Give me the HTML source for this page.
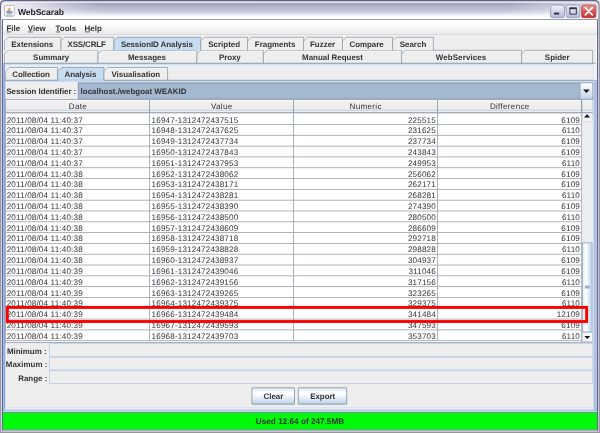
<!DOCTYPE html>
<html><head><meta charset="utf-8"><title>WebScarab</title>
<style>
html,body{margin:0;padding:0;background:#eeeeee;}
body{width:600px;height:433px;overflow:hidden;position:relative;font-family:"Liberation Sans",sans-serif;}
svg{position:absolute;left:0;top:0;display:block;will-change:transform;}
text{text-rendering:geometricPrecision;font-family:"Liberation Sans",sans-serif;font-size:8.1px;fill:#333333;}
.b{font-weight:bold;font-size:7.95px;}
.p{letter-spacing:0.16px;}
.c{text-anchor:middle;}
.e{text-anchor:end;}
</style></head><body>
<svg width="600" height="433" viewBox="0 0 600 433">
<defs>
<linearGradient id="gt" x1="0" y1="2" x2="0" y2="19" gradientUnits="userSpaceOnUse"><stop offset="0.03" stop-color="#d7d4e8"/><stop offset="0.09" stop-color="#aaa8c0"/><stop offset="0.147" stop-color="#a3a3bc"/><stop offset="0.2" stop-color="#afadc6"/><stop offset="0.26" stop-color="#b4b4cd"/><stop offset="0.38" stop-color="#b7bbd0"/><stop offset="0.5" stop-color="#c0c8d7"/><stop offset="0.62" stop-color="#cdd5e4"/><stop offset="0.68" stop-color="#dee1ee"/><stop offset="0.74" stop-color="#ebebf5"/><stop offset="0.79" stop-color="#f5f3fa"/><stop offset="0.85" stop-color="#fafafd"/><stop offset="0.91" stop-color="#ffffff"/></linearGradient>
<linearGradient id="gm" x1="0" y1="0" x2="0" y2="1"><stop offset="0" stop-color="#ffffff"/><stop offset="0.35" stop-color="#fbfbfb"/><stop offset="1" stop-color="#e9e9e9"/></linearGradient>
<linearGradient id="gb" x1="0" y1="0" x2="0" y2="1"><stop offset="0" stop-color="#dde8f3"/><stop offset="0.3" stop-color="#ffffff"/><stop offset="0.5" stop-color="#f4f8fc"/><stop offset="1" stop-color="#b8cfe5"/></linearGradient>
<linearGradient id="gc" x1="0" y1="0" x2="0" y2="1"><stop offset="0" stop-color="#ffffff"/><stop offset="0.4" stop-color="#e6eef7"/><stop offset="1" stop-color="#c2d4e8"/></linearGradient>
<linearGradient id="gh" x1="0" y1="0" x2="0" y2="1"><stop offset="0" stop-color="#fafafb"/><stop offset="0.15" stop-color="#f0f0f1"/><stop offset="1" stop-color="#e9eaec"/></linearGradient>
<linearGradient id="gw" x1="0" y1="0" x2="0" y2="1"><stop offset="0" stop-color="#f2f2fa"/><stop offset="1" stop-color="#b4b8d4"/></linearGradient>
<linearGradient id="gr" x1="0" y1="0" x2="0" y2="1"><stop offset="0" stop-color="#ee9a98"/><stop offset="0.45" stop-color="#dc5a58"/><stop offset="1" stop-color="#c23030"/></linearGradient>
<linearGradient id="gs" x1="0" y1="0" x2="1" y2="0"><stop offset="0" stop-color="#dde8f3"/><stop offset="0.35" stop-color="#ffffff"/><stop offset="1" stop-color="#b8cfe5"/></linearGradient>
<linearGradient id="gx" x1="0" y1="0" x2="1" y2="0"><stop offset="0" stop-color="#fff" stop-opacity="0.8"/><stop offset="0.05" stop-color="#fff" stop-opacity="0.62"/><stop offset="0.1" stop-color="#fff" stop-opacity="0.32"/><stop offset="0.165" stop-color="#fff" stop-opacity="0"/><stop offset="0.85" stop-color="#fff" stop-opacity="0"/><stop offset="0.93" stop-color="#fff" stop-opacity="0.35"/><stop offset="1" stop-color="#fff" stop-opacity="0.55"/></linearGradient>
</defs>

<rect x="0" y="0" width="600" height="433" fill="#eeeeee"/>
<path d="M0,21 L0,4.5 Q0,0 4.5,0 L594.5,0 Q599.5,0 599.5,4.5 L599.5,21 Z" fill="#62627c"/>
<path d="M1,21 L1,5.2 Q1,1.25 5.2,1.25 L594,1.25 Q598.6,1.25 598.6,5.2 L598.6,21 Z" fill="#efeef6"/>
<path d="M2,19.2 L2,5.8 Q2,2.2 5.8,2.2 L593.2,2.2 Q597.4,2.2 597.4,5.8 L597.4,19.2 Z" fill="url(#gt)"/>
<path d="M2,19 L2,5.8 Q2,2.2 5.8,2.2 L593.2,2.2 Q597.4,2.2 597.4,5.8 L597.4,19 Z" fill="url(#gx)"/>
<rect x="0" y="19.5" width="1" height="413.5" fill="#9c9aa8"/>
<rect x="1" y="19.5" width="1" height="413.5" fill="#d0d2e0"/>
<rect x="2" y="19.5" width="1" height="413.5" fill="#5f6c94"/>
<rect x="3" y="19.5" width="1" height="413.5" fill="#fbfbfd"/>
<rect x="596" y="19.5" width="1" height="413.5" fill="#fbfbfd"/>
<rect x="597" y="19.5" width="1" height="413.5" fill="#64698a"/>
<rect x="598" y="19.5" width="1" height="413.5" fill="#c8c8d8"/>
<rect x="599" y="19.5" width="1" height="413.5" fill="#9696a6"/>
<rect x="2" y="429.3" width="596" height="1.2" fill="#4a6a78"/>
<rect x="1" y="430.5" width="598" height="1.5" fill="#c8bed8"/>
<rect x="0" y="432" width="600" height="1" fill="#969698"/>
<rect x="2" y="19.05" width="596" height="1.15" fill="#9294a8"/>
<rect x="4.3" y="5.6" width="10.2" height="10.9" rx="1.4" fill="#8e94ae"/>
<rect x="4.9" y="5.9" width="9.1" height="9.5" rx="0.5" fill="#fcfdfe"/>
<path d="M10.9,6.4 C8.4,7.8 12.2,9.2 10.1,11.1 C9.2,11.2 7.0,10.8 7.3,9.6 C7.6,8.2 9.8,7.9 10.9,6.4 Z" fill="#f4a850"/>
<path d="M10.3,8.0 C9.3,8.9 10.8,9.6 9.7,10.7 C8.7,10.3 8.9,8.9 10.3,8.0 Z" fill="#e8801c"/>
<path d="M6.2,11.2 L12.2,11.2 L11.6,14.4 L6.9,14.4 Z" fill="#a2b2c6"/>
<path d="M12,11.7 Q13.9,12 11.7,13.6" fill="none" stroke="#8a9cb4" stroke-width="0.7"/>
<rect x="6.1" y="11.1" width="6.2" height="0.8" fill="#788ca6"/>
<rect x="7" y="12.4" width="4.6" height="0.6" fill="#7d90aa"/>
<text x="17.9" y="14.6" class="b" style="font-size:8.6px;fill:#1c1c26;letter-spacing:-0.08px">WebScarab</text>
<rect x="550.6" y="5.1" width="13.8" height="12.6" rx="1.8" fill="url(#gw)" stroke="#8f94b6" stroke-width="0.8"/>
<rect x="554" y="12.6" width="5.2" height="1.9" fill="#2a2c3c"/>
<rect x="566.3" y="5.1" width="13.5" height="12.6" rx="1.8" fill="url(#gw)" stroke="#8f94b6" stroke-width="0.8"/>
<rect x="569.9" y="8.2" width="6.4" height="5.9" fill="#d6d8ea" stroke="#2a2c3c" stroke-width="0.9"/>
<rect x="569.5" y="7.4" width="7.2" height="1.7" fill="#2a2c3c"/>
<rect x="581.6" y="5.1" width="14.3" height="12.6" rx="1.8" fill="url(#gr)" stroke="#b04a52" stroke-width="0.8"/>
<path d="M585.3,7.6 L592.3,14.8 M592.3,7.6 L585.3,14.8" stroke="#ffffff" stroke-width="1.65" stroke-linecap="round"/>
<rect x="3" y="20" width="594" height="14.5" fill="url(#gm)"/>
<rect x="3" y="34.3" width="594" height="0.7" fill="#d4d4d4"/>
<text x="6.4" y="30.6" class="b">File</text>
<rect x="6.6000000000000005" y="31.6" width="4.6" height="0.7" fill="#333"/>
<text x="27.8" y="30.6" class="b">View</text>
<rect x="28.0" y="31.6" width="5" height="0.7" fill="#333"/>
<text x="55.6" y="30.6" class="b">Tools</text>
<rect x="55.800000000000004" y="31.6" width="4.6" height="0.7" fill="#333"/>
<text x="84.6" y="30.6" class="b">Help</text>
<rect x="84.8" y="31.6" width="5.4" height="0.7" fill="#333"/>
<path d="M4.4,63.2 L4.4,54.099999999999994 L8.2,50.3 L98,50.3 L98,63.2 Z" fill="#eeeeee"/>
<path d="M5.15,63.2 L5.15,54.39999999999999 L8.5,51.05 L97.6,51.05" fill="none" stroke="#ffffff" stroke-width="0.7" opacity="0.9"/>
<path d="M4.4,63.2 L4.4,54.099999999999994 L8.2,50.3 L98,50.3 L98,63.2" fill="none" stroke="#8796a6" stroke-width="0.75"/>
<text x="51.2" y="59.55" class="b c" style="letter-spacing:0px">Summary</text>
<path d="M98,63.2 L98,54.099999999999994 L101.8,50.3 L197,50.3 L197,63.2 Z" fill="#eeeeee"/>
<path d="M98.75,63.2 L98.75,54.39999999999999 L102.1,51.05 L196.6,51.05" fill="none" stroke="#ffffff" stroke-width="0.7" opacity="0.9"/>
<path d="M98,63.2 L98,54.099999999999994 L101.8,50.3 L197,50.3 L197,63.2" fill="none" stroke="#8796a6" stroke-width="0.75"/>
<text x="146.9" y="59.55" class="b c" style="letter-spacing:0px">Messages</text>
<path d="M197,63.2 L197,54.099999999999994 L200.8,50.3 L263.4,50.3 L263.4,63.2 Z" fill="#eeeeee"/>
<path d="M197.75,63.2 L197.75,54.39999999999999 L201.10000000000002,51.05 L263.0,51.05" fill="none" stroke="#ffffff" stroke-width="0.7" opacity="0.9"/>
<path d="M197,63.2 L197,54.099999999999994 L200.8,50.3 L263.4,50.3 L263.4,63.2" fill="none" stroke="#8796a6" stroke-width="0.75"/>
<text x="229.79999999999998" y="59.55" class="b c" style="letter-spacing:-0.1px">Proxy</text>
<path d="M263.4,63.2 L263.4,54.099999999999994 L267.2,50.3 L401.6,50.3 L401.6,63.2 Z" fill="#eeeeee"/>
<path d="M264.15,63.2 L264.15,54.39999999999999 L267.5,51.05 L401.20000000000005,51.05" fill="none" stroke="#ffffff" stroke-width="0.7" opacity="0.9"/>
<path d="M263.4,63.2 L263.4,54.099999999999994 L267.2,50.3 L401.6,50.3 L401.6,63.2" fill="none" stroke="#8796a6" stroke-width="0.75"/>
<text x="332.5" y="59.55" class="b c" style="letter-spacing:0px">Manual Request</text>
<path d="M401.6,63.2 L401.6,54.099999999999994 L405.40000000000003,50.3 L521.7,50.3 L521.7,63.2 Z" fill="#eeeeee"/>
<path d="M402.35,63.2 L402.35,54.39999999999999 L405.70000000000005,51.05 L521.3000000000001,51.05" fill="none" stroke="#ffffff" stroke-width="0.7" opacity="0.9"/>
<path d="M401.6,63.2 L401.6,54.099999999999994 L405.40000000000003,50.3 L521.7,50.3 L521.7,63.2" fill="none" stroke="#8796a6" stroke-width="0.75"/>
<text x="461.05" y="59.55" class="b c" style="letter-spacing:0.13px">WebServices</text>
<path d="M521.7,63.2 L521.7,54.099999999999994 L525.5,50.3 L592.7,50.3 L592.7,63.2 Z" fill="#eeeeee"/>
<path d="M522.45,63.2 L522.45,54.39999999999999 L525.8,51.05 L592.3000000000001,51.05" fill="none" stroke="#ffffff" stroke-width="0.7" opacity="0.9"/>
<path d="M521.7,63.2 L521.7,54.099999999999994 L525.5,50.3 L592.7,50.3 L592.7,63.2" fill="none" stroke="#8796a6" stroke-width="0.75"/>
<text x="557.2" y="59.55" class="b c" style="letter-spacing:0px">Spider</text>
<path d="M4.4,50.3 L4.4,41.099999999999994 L8.2,37.3 L61,37.3 L61,50.3 Z" fill="#eeeeee"/>
<path d="M5.15,50.3 L5.15,41.39999999999999 L8.5,38.05 L60.6,38.05" fill="none" stroke="#ffffff" stroke-width="0.7" opacity="0.9"/>
<path d="M4.4,50.3 L4.4,41.099999999999994 L8.2,37.3 L61,37.3 L61,50.3" fill="none" stroke="#8796a6" stroke-width="0.75"/>
<text x="32.300000000000004" y="46.55" class="b c" style="letter-spacing:-0.05px">Extensions</text>
<path d="M61,50.3 L61,41.099999999999994 L64.8,37.3 L113.9,37.3 L113.9,50.3 Z" fill="#eeeeee"/>
<path d="M61.75,50.3 L61.75,41.39999999999999 L65.1,38.05 L113.5,38.05" fill="none" stroke="#ffffff" stroke-width="0.7" opacity="0.9"/>
<path d="M61,50.3 L61,41.099999999999994 L64.8,37.3 L113.9,37.3 L113.9,50.3" fill="none" stroke="#8796a6" stroke-width="0.75"/>
<text x="86.65" y="46.55" class="b c" style="letter-spacing:-0.12px">XSS/CRLF</text>
<path d="M113.9,50.3 L113.9,41.099999999999994 L117.7,37.3 L200.8,37.3 L200.8,50.3 Z" fill="#c8ddf2"/>
<path d="M114.65,50.3 L114.65,41.39999999999999 L118.0,38.05 L200.4,38.05" fill="none" stroke="#ffffff" stroke-width="0.7" opacity="0.0"/>
<path d="M113.9,50.3 L113.9,41.099999999999994 L117.7,37.3 L200.8,37.3 L200.8,50.3" fill="none" stroke="#8796a6" stroke-width="0.75"/>
<text x="156.85000000000002" y="46.55" class="b c" style="letter-spacing:-0.06px">SessionID Analysis</text>
<path d="M200.8,50.3 L200.8,41.099999999999994 L204.60000000000002,37.3 L247.6,37.3 L247.6,50.3 Z" fill="#eeeeee"/>
<path d="M201.55,50.3 L201.55,41.39999999999999 L204.90000000000003,38.05 L247.2,38.05" fill="none" stroke="#ffffff" stroke-width="0.7" opacity="0.9"/>
<path d="M200.8,50.3 L200.8,41.099999999999994 L204.60000000000002,37.3 L247.6,37.3 L247.6,50.3" fill="none" stroke="#8796a6" stroke-width="0.75"/>
<text x="224.2" y="46.55" class="b c" style="letter-spacing:0px">Scripted</text>
<path d="M247.6,50.3 L247.6,41.099999999999994 L251.4,37.3 L303.7,37.3 L303.7,50.3 Z" fill="#eeeeee"/>
<path d="M248.35,50.3 L248.35,41.39999999999999 L251.70000000000002,38.05 L303.3,38.05" fill="none" stroke="#ffffff" stroke-width="0.7" opacity="0.9"/>
<path d="M247.6,50.3 L247.6,41.099999999999994 L251.4,37.3 L303.7,37.3 L303.7,50.3" fill="none" stroke="#8796a6" stroke-width="0.75"/>
<text x="275.15" y="46.55" class="b c" style="letter-spacing:0px">Fragments</text>
<path d="M303.7,50.3 L303.7,41.099999999999994 L307.5,37.3 L342.5,37.3 L342.5,50.3 Z" fill="#eeeeee"/>
<path d="M304.45,50.3 L304.45,41.39999999999999 L307.8,38.05 L342.1,38.05" fill="none" stroke="#ffffff" stroke-width="0.7" opacity="0.9"/>
<path d="M303.7,50.3 L303.7,41.099999999999994 L307.5,37.3 L342.5,37.3 L342.5,50.3" fill="none" stroke="#8796a6" stroke-width="0.75"/>
<text x="322.6" y="46.55" class="b c" style="letter-spacing:0px">Fuzzer</text>
<path d="M342.5,50.3 L342.5,41.099999999999994 L346.3,37.3 L392.6,37.3 L392.6,50.3 Z" fill="#eeeeee"/>
<path d="M343.25,50.3 L343.25,41.39999999999999 L346.6,38.05 L392.20000000000005,38.05" fill="none" stroke="#ffffff" stroke-width="0.7" opacity="0.9"/>
<path d="M342.5,50.3 L342.5,41.099999999999994 L346.3,37.3 L392.6,37.3 L392.6,50.3" fill="none" stroke="#8796a6" stroke-width="0.75"/>
<text x="366.55" y="46.55" class="b c" style="letter-spacing:-0.05px">Compare</text>
<path d="M392.6,50.3 L392.6,41.099999999999994 L396.40000000000003,37.3 L433.4,37.3 L433.4,50.3 Z" fill="#eeeeee"/>
<path d="M393.35,50.3 L393.35,41.39999999999999 L396.70000000000005,38.05 L433.0,38.05" fill="none" stroke="#ffffff" stroke-width="0.7" opacity="0.9"/>
<path d="M392.6,50.3 L392.6,41.099999999999994 L396.40000000000003,37.3 L433.4,37.3 L433.4,50.3" fill="none" stroke="#8796a6" stroke-width="0.75"/>
<text x="413.0" y="46.55" class="b c" style="letter-spacing:0px">Search</text>
<rect x="3" y="63.2" width="593" height="349" fill="#c8ddf2"/>
<rect x="3" y="62.8" width="593" height="0.9" fill="#8796a6"/>
<rect x="3" y="63.2" width="1" height="349" fill="#a5b6e3"/>
<rect x="4" y="63.7" width="1" height="346" fill="#98a4d2"/>
<rect x="594" y="63.7" width="3" height="16.3" fill="#eef2fa"/>
<rect x="594.8" y="80" width="2.2" height="331" fill="#b0c2e6"/>
<rect x="594" y="80" width="0.8" height="329.5" fill="#a9b8d6"/>
<rect x="3" y="409.4" width="594" height="1.3" fill="#9baac3"/>
<rect x="3" y="410.7" width="594" height="1.5" fill="#c8d7fa"/>
<rect x="5" y="64.9" width="589" height="344.5" fill="#eeeeee"/>
<rect x="5" y="64.9" width="589" height="0.5" fill="#d2e3f4"/>
<rect x="5" y="65.4" width="589" height="2" fill="#e6eef8"/>
<rect x="5" y="408" width="589" height="1.4" fill="#ecf0f8"/>
<rect x="5" y="66" width="1" height="343" fill="#e6f0fa"/>
<rect x="592.4" y="66" width="1.6" height="343" fill="#e6ecf8"/>
<path d="M5.7,80.2 L5.7,71.3 L9.5,67.5 L57.6,67.5 L57.6,80.2 Z" fill="#eeeeee"/>
<path d="M6.45,80.2 L6.45,71.6 L9.8,68.25 L57.2,68.25" fill="none" stroke="#ffffff" stroke-width="0.7" opacity="0.9"/>
<path d="M5.7,80.2 L5.7,71.3 L9.5,67.5 L57.6,67.5 L57.6,80.2" fill="none" stroke="#8796a6" stroke-width="0.75"/>
<text x="31.05" y="76.6" class="b c" style="letter-spacing:-0.1px">Collection</text>
<path d="M57.6,80.2 L57.6,71.3 L61.4,67.5 L104,67.5 L104,80.2 Z" fill="#c8ddf2"/>
<path d="M58.35,80.2 L58.35,71.6 L61.699999999999996,68.25 L103.6,68.25" fill="none" stroke="#ffffff" stroke-width="0.7" opacity="0.0"/>
<path d="M57.6,80.2 L57.6,71.3 L61.4,67.5 L104,67.5 L104,80.2" fill="none" stroke="#8796a6" stroke-width="0.75"/>
<text x="80.39999999999999" y="76.6" class="b c" style="letter-spacing:-0.12px">Analysis</text>
<path d="M104,80.2 L104,71.3 L107.8,67.5 L167.6,67.5 L167.6,80.2 Z" fill="#eeeeee"/>
<path d="M104.75,80.2 L104.75,71.6 L108.1,68.25 L167.2,68.25" fill="none" stroke="#ffffff" stroke-width="0.7" opacity="0.9"/>
<path d="M104,80.2 L104,71.3 L107.8,67.5 L167.6,67.5 L167.6,80.2" fill="none" stroke="#8796a6" stroke-width="0.75"/>
<text x="135.8" y="76.6" class="b c" style="letter-spacing:0px">Visualisation</text>
<rect x="5" y="80.2" width="589" height="328" fill="#c8ddf2"/>
<rect x="5" y="79.8" width="589" height="0.9" fill="#8796a6"/>
<rect x="58" y="79.7" width="45.7" height="1.1" fill="#c8ddf2"/>
<rect x="6" y="81.9" width="587" height="325.6" fill="#eeeeee"/>
<text x="6.4" y="94.1" class="b" style="letter-spacing:-0.06px">Session Identifier :</text>
<rect x="78.3" y="82.9" width="514.4" height="16.2" fill="#a4b9d0" stroke="#7d8fa8" stroke-width="0.9"/>
<rect x="580.2" y="83.3" width="12.2" height="15.5" fill="url(#gc)"/>
<rect x="579.8" y="83" width="0.6" height="16" fill="#8a9aac"/>
<path d="M583,89.4 L589.8,89.4 L586.4,93.1 Z" fill="#111"/>
<text x="80.6" y="94.1" class="b">localhost./webgoat WEAKID</text>
<rect x="5.5" y="99.6" width="587" height="243" fill="#ffffff" stroke="#98a6ba" stroke-width="0.9"/>
<rect x="6" y="100.0" width="586.6" height="13.0" fill="url(#gh)"/>
<rect x="6" y="109.8" width="586.6" height="0.9" fill="#b4c0cf"/>
<rect x="6" y="110.7" width="586.6" height="1.6" fill="#eceff3"/>
<rect x="6" y="112.3" width="586.6" height="1" fill="#8593a3"/>
<rect x="149.0" y="100.0" width="0.8" height="13.0" fill="#8796a6"/>
<rect x="293.0" y="100.0" width="0.8" height="13.0" fill="#8796a6"/>
<rect x="437.0" y="100.0" width="0.8" height="13.0" fill="#8796a6"/>
<rect x="581.1" y="100.0" width="0.8" height="13.0" fill="#8796a6"/>
<text x="78.0" y="108.5" class="c" style="letter-spacing:0.3px">Date</text>
<text x="221.7" y="108.5" class="c" style="letter-spacing:0.3px">Value</text>
<text x="365.7" y="108.5" class="c" style="letter-spacing:0.3px">Numeric</text>
<text x="509.75" y="108.5" class="c" style="letter-spacing:0.3px">Difference</text>
<rect x="6" y="124.10" width="575.5" height="0.8" fill="#96a0ad"/>
<text x="6.7" y="122.55" class="p">2011/08/04 11:40:37</text>
<text x="151.6" y="122.55" class="p">16947-1312472437515</text>
<text x="435.9" y="122.55" class="p e">225515</text>
<text x="580" y="122.55" class="p e">6109</text>
<rect x="6" y="134.91" width="575.5" height="0.8" fill="#96a0ad"/>
<text x="6.7" y="133.36" class="p">2011/08/04 11:40:37</text>
<text x="151.6" y="133.36" class="p">16948-1312472437625</text>
<text x="435.9" y="133.36" class="p e">231625</text>
<text x="580" y="133.36" class="p e">6110</text>
<rect x="6" y="145.72" width="575.5" height="0.8" fill="#96a0ad"/>
<text x="6.7" y="144.17" class="p">2011/08/04 11:40:37</text>
<text x="151.6" y="144.17" class="p">16949-1312472437734</text>
<text x="435.9" y="144.17" class="p e">237734</text>
<text x="580" y="144.17" class="p e">6109</text>
<rect x="6" y="156.53" width="575.5" height="0.8" fill="#96a0ad"/>
<text x="6.7" y="154.98" class="p">2011/08/04 11:40:37</text>
<text x="151.6" y="154.98" class="p">16950-1312472437843</text>
<text x="435.9" y="154.98" class="p e">243843</text>
<text x="580" y="154.98" class="p e">6109</text>
<rect x="6" y="167.34" width="575.5" height="0.8" fill="#96a0ad"/>
<text x="6.7" y="165.79" class="p">2011/08/04 11:40:37</text>
<text x="151.6" y="165.79" class="p">16951-1312472437953</text>
<text x="435.9" y="165.79" class="p e">249953</text>
<text x="580" y="165.79" class="p e">6110</text>
<rect x="6" y="178.15" width="575.5" height="0.8" fill="#96a0ad"/>
<text x="6.7" y="176.60" class="p">2011/08/04 11:40:38</text>
<text x="151.6" y="176.60" class="p">16952-1312472438062</text>
<text x="435.9" y="176.60" class="p e">256062</text>
<text x="580" y="176.60" class="p e">6109</text>
<rect x="6" y="188.96" width="575.5" height="0.8" fill="#96a0ad"/>
<text x="6.7" y="187.41" class="p">2011/08/04 11:40:38</text>
<text x="151.6" y="187.41" class="p">16953-1312472438171</text>
<text x="435.9" y="187.41" class="p e">262171</text>
<text x="580" y="187.41" class="p e">6109</text>
<rect x="6" y="199.77" width="575.5" height="0.8" fill="#96a0ad"/>
<text x="6.7" y="198.22" class="p">2011/08/04 11:40:38</text>
<text x="151.6" y="198.22" class="p">16954-1312472438281</text>
<text x="435.9" y="198.22" class="p e">268281</text>
<text x="580" y="198.22" class="p e">6110</text>
<rect x="6" y="210.58" width="575.5" height="0.8" fill="#96a0ad"/>
<text x="6.7" y="209.03" class="p">2011/08/04 11:40:38</text>
<text x="151.6" y="209.03" class="p">16955-1312472438390</text>
<text x="435.9" y="209.03" class="p e">274390</text>
<text x="580" y="209.03" class="p e">6109</text>
<rect x="6" y="221.39" width="575.5" height="0.8" fill="#96a0ad"/>
<text x="6.7" y="219.84" class="p">2011/08/04 11:40:38</text>
<text x="151.6" y="219.84" class="p">16956-1312472438500</text>
<text x="435.9" y="219.84" class="p e">280500</text>
<text x="580" y="219.84" class="p e">6110</text>
<rect x="6" y="232.20" width="575.5" height="0.8" fill="#96a0ad"/>
<text x="6.7" y="230.65" class="p">2011/08/04 11:40:38</text>
<text x="151.6" y="230.65" class="p">16957-1312472438609</text>
<text x="435.9" y="230.65" class="p e">286609</text>
<text x="580" y="230.65" class="p e">6109</text>
<rect x="6" y="243.01" width="575.5" height="0.8" fill="#96a0ad"/>
<text x="6.7" y="241.46" class="p">2011/08/04 11:40:38</text>
<text x="151.6" y="241.46" class="p">16958-1312472438718</text>
<text x="435.9" y="241.46" class="p e">292718</text>
<text x="580" y="241.46" class="p e">6109</text>
<rect x="6" y="253.82" width="575.5" height="0.8" fill="#96a0ad"/>
<text x="6.7" y="252.27" class="p">2011/08/04 11:40:38</text>
<text x="151.6" y="252.27" class="p">16959-1312472438828</text>
<text x="435.9" y="252.27" class="p e">298828</text>
<text x="580" y="252.27" class="p e">6110</text>
<rect x="6" y="264.63" width="575.5" height="0.8" fill="#96a0ad"/>
<text x="6.7" y="263.08" class="p">2011/08/04 11:40:38</text>
<text x="151.6" y="263.08" class="p">16960-1312472438937</text>
<text x="435.9" y="263.08" class="p e">304937</text>
<text x="580" y="263.08" class="p e">6109</text>
<rect x="6" y="275.44" width="575.5" height="0.8" fill="#96a0ad"/>
<text x="6.7" y="273.89" class="p">2011/08/04 11:40:39</text>
<text x="151.6" y="273.89" class="p">16961-1312472439046</text>
<text x="435.9" y="273.89" class="p e">311046</text>
<text x="580" y="273.89" class="p e">6109</text>
<rect x="6" y="286.25" width="575.5" height="0.8" fill="#96a0ad"/>
<text x="6.7" y="284.70" class="p">2011/08/04 11:40:39</text>
<text x="151.6" y="284.70" class="p">16962-1312472439156</text>
<text x="435.9" y="284.70" class="p e">317156</text>
<text x="580" y="284.70" class="p e">6110</text>
<rect x="6" y="297.06" width="575.5" height="0.8" fill="#96a0ad"/>
<text x="6.7" y="295.51" class="p">2011/08/04 11:40:39</text>
<text x="151.6" y="295.51" class="p">16963-1312472439265</text>
<text x="435.9" y="295.51" class="p e">323265</text>
<text x="580" y="295.51" class="p e">6109</text>
<rect x="6" y="307.87" width="575.5" height="0.8" fill="#96a0ad"/>
<text x="6.7" y="306.32" class="p">2011/08/04 11:40:39</text>
<text x="151.6" y="306.32" class="p">16964-1312472439375</text>
<text x="435.9" y="306.32" class="p e">329375</text>
<text x="580" y="306.32" class="p e">6110</text>
<rect x="6" y="318.68" width="575.5" height="0.8" fill="#96a0ad"/>
<text x="6.7" y="317.13" class="p">2011/08/04 11:40:39</text>
<text x="151.6" y="317.13" class="p">16966-1312472439484</text>
<text x="435.9" y="317.13" class="p e">341484</text>
<text x="580" y="317.13" class="p e">12109</text>
<rect x="6" y="329.49" width="575.5" height="0.8" fill="#96a0ad"/>
<text x="6.7" y="327.94" class="p">2011/08/04 11:40:39</text>
<text x="151.6" y="327.94" class="p">16967-1312472439593</text>
<text x="435.9" y="327.94" class="p e">347593</text>
<text x="580" y="327.94" class="p e">6109</text>
<rect x="6" y="340.30" width="575.5" height="0.8" fill="#96a0ad"/>
<text x="6.7" y="338.75" class="p">2011/08/04 11:40:39</text>
<text x="151.6" y="338.75" class="p">16968-1312472439703</text>
<text x="435.9" y="338.75" class="p e">353703</text>
<text x="580" y="338.75" class="p e">6110</text>
<rect x="149.0" y="113.0" width="0.8" height="227.70" fill="#96a0ad"/>
<rect x="293.0" y="113.0" width="0.8" height="227.70" fill="#96a0ad"/>
<rect x="437.0" y="113.0" width="0.8" height="227.70" fill="#96a0ad"/>
<rect x="581.8" y="113.4" width="11.200000000000045" height="228.9" fill="#eeeeee"/>
<rect x="581.4" y="100.0" width="0.8" height="242.3" fill="#8796a6"/>
<rect x="582.3" y="113.3" width="10.000000000000046" height="8.4" fill="#f3f5f8" stroke="#d0d8e2" stroke-width="0.6"/>
<path d="M584,117.5 L590.2,117.5 L587.1,114.3 Z" fill="#111"/>
<rect x="582.1999999999999" y="122" width="10.400000000000045" height="120.6" fill="#ebedf0"/>
<rect x="582.6" y="242.9" width="9.5" height="89" fill="url(#gs)" stroke="#8aa0c8" stroke-width="0.7"/>
<rect x="584.9" y="285.6" width="4.8" height="2.9" fill="#9fb0c8"/>
<rect x="582.3" y="332.7" width="10.000000000000046" height="8.9" fill="#f4f6f9" stroke="#a9b6c6" stroke-width="0.6"/>
<path d="M584.4,335.9 L590.2,335.9 L587.3,338.9 Z" fill="#111"/>
<rect x="7.3" y="307.4" width="579.3" height="14.1" fill="none" stroke="#ff0000" stroke-width="2.9"/>
<rect x="49.4" y="343.70" width="543.4" height="12.6" fill="#eeeeee" stroke="#b9cde2" stroke-width="0.8"/>
<text x="46.6" y="353.50" class="b e">Minimum :</text>
<rect x="49.4" y="357.25" width="543.4" height="12.6" fill="#eeeeee" stroke="#b9cde2" stroke-width="0.8"/>
<text x="47.3" y="367.05" class="b e">Maximum :</text>
<rect x="49.4" y="370.80" width="543.4" height="12.6" fill="#eeeeee" stroke="#b9cde2" stroke-width="0.8"/>
<text x="47.3" y="380.60" class="b e">Range :</text>
<rect x="251.9" y="387.8" width="42.599999999999994" height="16.4" rx="0.6" fill="url(#gb)" stroke="#7a8a99" stroke-width="0.75"/>
<text x="273.4" y="399.1" class="b c">Clear</text>
<rect x="298.3" y="387.8" width="48.39999999999998" height="16.4" rx="0.6" fill="url(#gb)" stroke="#7a8a99" stroke-width="0.75"/>
<text x="322.7" y="399.1" class="b c">Export</text>
<rect x="3" y="412.2" width="594" height="1" fill="#4f7f70"/>
<rect x="3" y="413" width="594" height="16.4" fill="#00fb0a"/>
<text x="300" y="424.3" class="b c" style="font-size:8.2px">Used 12.64 of 247.5MB</text>
</svg>
</body></html>
